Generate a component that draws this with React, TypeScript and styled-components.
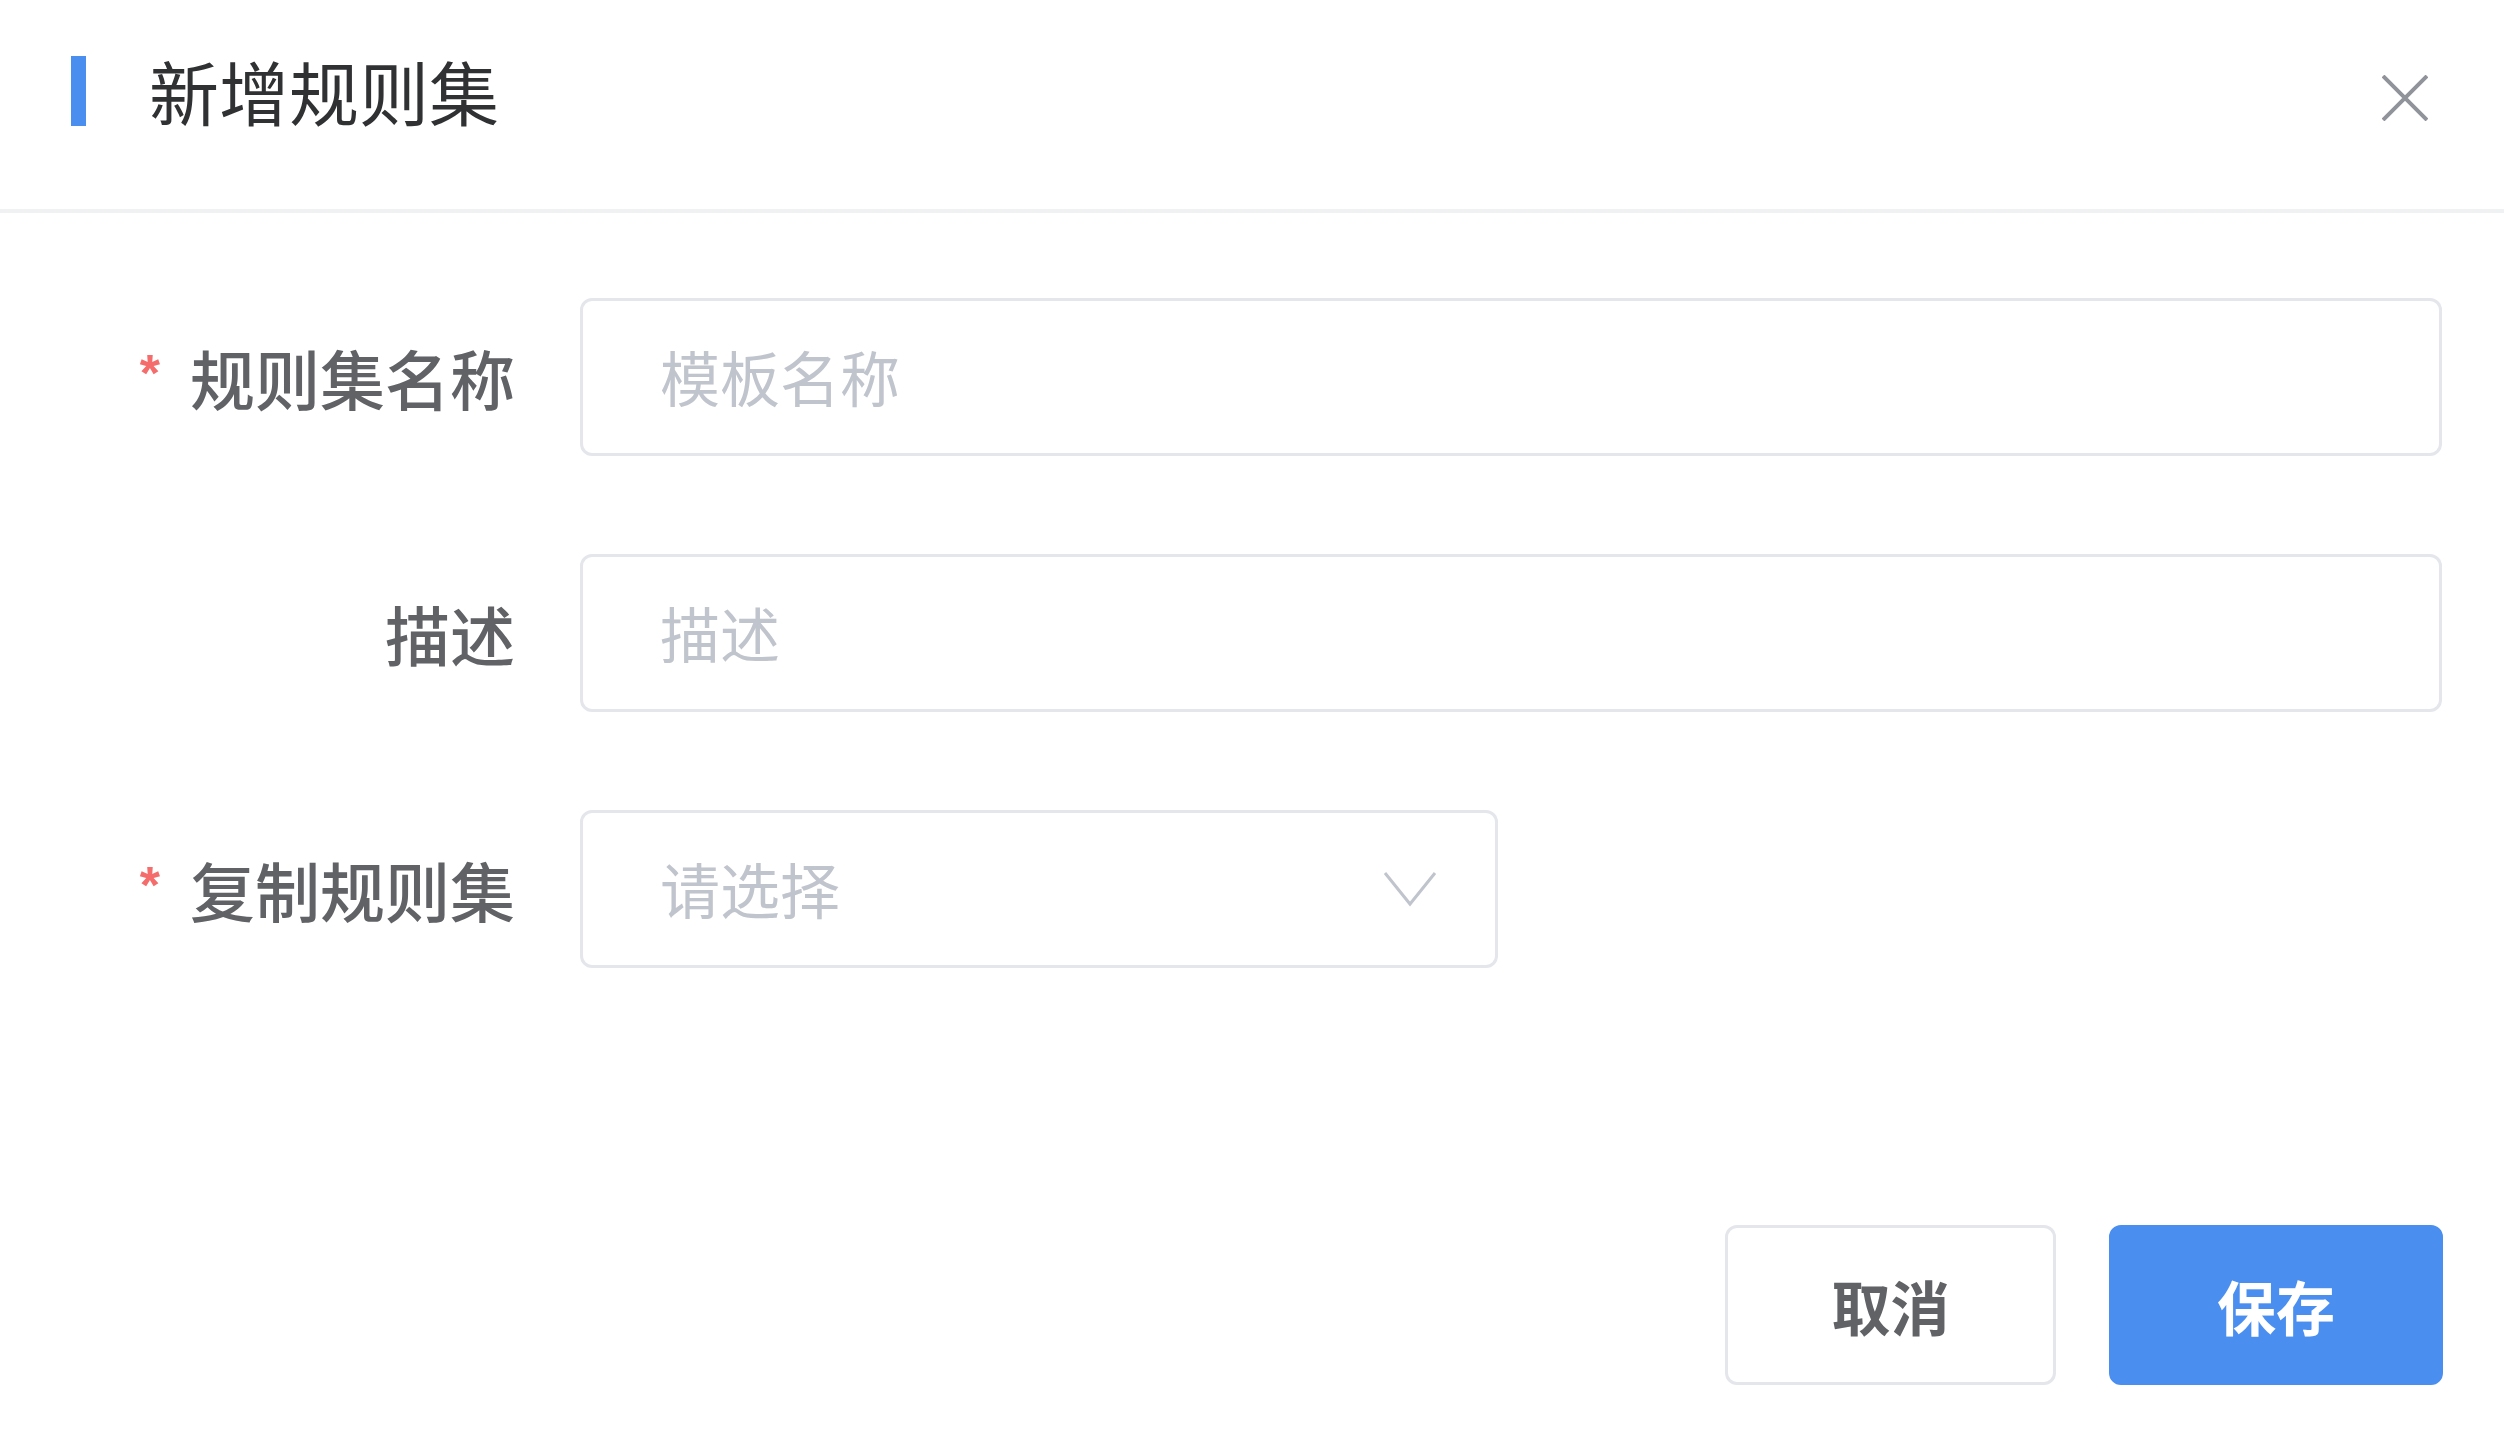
import styled, { createGlobalStyle } from "styled-components";

const GlobalStyle = createGlobalStyle`
  html, body {
    margin: 0;
    padding: 0;
    background: #ffffff;
  }
  * {
    box-sizing: border-box;
  }
  body {
    font-family: "Noto Sans CJK SC", "Noto Sans", sans-serif;
  }
`;

const Dialog = styled.div`
  width: 2504px;
  height: 1440px;
  display: flex;
  flex-direction: column;
  background: #ffffff;
`;

const Header = styled.header`
  height: 213px;
  display: flex;
  align-items: flex-start;
  padding: 56px 76px 0 71px;
  border-bottom: 4px solid #f0f1f3;
`;

const TitleBar = styled.span`
  width: 15px;
  height: 70px;
  background: #4a8ff0;
  margin-right: 63px;
  flex-shrink: 0;
`;

const Title = styled.h2`
  margin: 0;
  font-size: 70px;
  line-height: 70px;
  font-weight: 400;
  color: #303133;
  flex: 1;
`;

const CloseButton = styled.button`
  width: 46px;
  height: 46px;
  margin-top: 19px;
  padding: 0;
  border: none;
  background: transparent;
  display: flex;
  cursor: pointer;
`;

const Form = styled.form`
  display: flex;
  flex-direction: column;
  gap: 98px;
  padding: 85px 62px 0 0;
`;

const Row = styled.div`
  display: grid;
  grid-template-columns: 580px 1fr;
  align-items: center;
`;

const Label = styled.label`
  display: flex;
  justify-content: flex-end;
  align-items: center;
  padding-right: 65px;
  font-size: 65px;
  line-height: 80px;
  font-weight: 500;
  color: #606266;
  white-space: nowrap;
`;

const Required = styled.span`
  color: #f56c6c;
  font-size: 52px;
  line-height: 52px;
  font-weight: 700;
  margin-right: 30px;
  margin-top: -8px;
  font-family: "Liberation Sans", sans-serif;
`;

const Field = styled.div<{ $width?: string }>`
  width: ${({ $width }) => $width ?? "100%"};
  height: 158px;
  border: 3px solid #e4e6eb;
  border-radius: 12px;
  display: flex;
  align-items: center;
  padding: 0 58px 0 77px;
  background: #ffffff;
`;

const Input = styled.input`
  flex: 1;
  min-width: 0;
  border: none;
  outline: none;
  background: transparent;
  font-family: inherit;
  font-size: 60px;
  color: #606266;
  padding: 0;
  margin-top: -4px;

  &::placeholder {
    color: #c0c4cc;
  }
`;

const Footer = styled.footer`
  margin-top: auto;
  display: flex;
  justify-content: flex-end;
  gap: 53px;
  padding: 0 61px 55px 0;
`;

const Button = styled.button<{ $primary?: boolean }>`
  width: ${({ $primary }) => ($primary ? "334px" : "331px")};
  height: 160px;
  border-radius: 12px;
  border: 3px solid ${({ $primary }) => ($primary ? "#4a8ff0" : "#e4e6eb")};
  background: ${({ $primary }) => ($primary ? "#4a8ff0" : "#ffffff")};
  color: ${({ $primary }) => ($primary ? "#ffffff" : "#606266")};
  font-family: inherit;
  font-size: 59px;
  font-weight: 600;
  cursor: pointer;
`;

const CloseIcon = () => (
  <svg width="46" height="46" viewBox="0 0 46 46">
    <path
      d="M1 1 L45 45 M45 1 L1 45"
      stroke="#909399"
      strokeWidth="4"
      fill="none"
    />
  </svg>
);

const ChevronDown = () => (
  <svg width="54" height="36" viewBox="0 0 54 36">
    <path
      d="M2 2 L27 33 L52 2"
      stroke="#c0c4cc"
      strokeWidth="3"
      fill="none"
    />
  </svg>
);

export default function App() {
  return (
    <>
      <GlobalStyle />
      <Dialog>
        <Header>
          <TitleBar />
          <Title>新增规则集</Title>
          <CloseButton type="button" aria-label="关闭">
            <CloseIcon />
          </CloseButton>
        </Header>
        <Form onSubmit={(e) => e.preventDefault()}>
          <Row>
            <Label>
              <Required>*</Required>规则集名称
            </Label>
            <Field>
              <Input placeholder="模板名称" />
            </Field>
          </Row>
          <Row>
            <Label>描述</Label>
            <Field>
              <Input placeholder="描述" />
            </Field>
          </Row>
          <Row>
            <Label>
              <Required>*</Required>复制规则集
            </Label>
            <Field $width="918px">
              <Input placeholder="请选择" readOnly />
              <ChevronDown />
            </Field>
          </Row>
        </Form>
        <Footer>
          <Button type="button">取消</Button>
          <Button type="button" $primary>
            保存
          </Button>
        </Footer>
      </Dialog>
    </>
  );
}
